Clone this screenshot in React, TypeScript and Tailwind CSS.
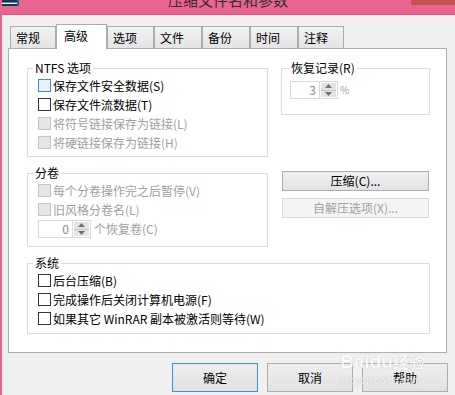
import React from "react";

type Kind = "focus" | "normal" | "disabled";

function Check({ label, kind }: { label: string; kind: Kind }) {
  const box =
    kind === "focus"
      ? "border-[#3c8fe0] bg-[#eaf3fc]"
      : kind === "disabled"
      ? "border-[#c4c4c4] bg-[#e6e6e6]"
      : "border-[#333333] bg-white";
  const text = kind === "disabled" ? "text-[#a0a0a0]" : "text-black";
  return (
    <div className="flex h-[19px] items-center">
      <span className={`block h-[13px] w-[13px] shrink-0 border ${box}`} />
      <span className={`ml-[2px] whitespace-nowrap text-[12px] leading-[14px] ${text}`}>{label}</span>
    </div>
  );
}

function Group({
  legend,
  legendLeft,
  className,
  children,
}: {
  legend: string;
  legendLeft: string;
  className: string;
  children?: React.ReactNode;
}) {
  return (
    <div className={`relative border border-[#dcdcdc] ${className}`}>
      <span
        className={`absolute top-[-8px] ${legendLeft} whitespace-nowrap bg-white px-[2px] text-[12px] leading-[14px] text-black`}
      >
        {legend}
      </span>
      {children}
    </div>
  );
}

function Spin({ value, inputW }: { value: string; inputW: string }) {
  return (
    <div className="flex h-[18px]">
      <div
        className={`${inputW} border border-[#d9d9d9] bg-white pr-[3px] text-right text-[12px] leading-[16px] text-[#8a8a8a]`}
      >
        {value}
      </div>
      <div className="flex w-[18px] flex-col border border-l-0 border-[#d9d9d9] bg-white p-px">
        <div className="flex flex-1 items-center justify-center border-b border-[#c8c8c8] bg-[#e4e4e4]">
          <svg width="7" height="4" viewBox="0 0 7 4">
            <path d="M0 4 L3.5 0 L7 4 Z" fill="#707070" />
          </svg>
        </div>
        <div className="flex flex-1 items-center justify-center bg-[#e4e4e4]">
          <svg width="7" height="4" viewBox="0 0 7 4">
            <path d="M0 0 L3.5 4 L7 0 Z" fill="#707070" />
          </svg>
        </div>
      </div>
    </div>
  );
}

const tabs = [
  { t: "常规", w: "w-[46px]" },
  { t: "高级", w: "w-[51px]", sel: true },
  { t: "选项", w: "w-[47px]" },
  { t: "文件", w: "w-[48px]" },
  { t: "备份", w: "w-[48px]" },
  { t: "时间", w: "w-[48px]" },
  { t: "注释", w: "w-[46px]" },
];

export default function App() {
  return (
    <div className="relative flex h-[395px] w-[455px] flex-col overflow-hidden border-l-2 border-[#e6668f] bg-[#f0f0f0] font-['Noto_Sans_CJK_SC','Liberation_Sans',sans-serif]">
      {/* title bar */}
      <div className="flex h-[15px] shrink-0 items-start overflow-hidden border-b border-[#cc5a80] bg-[#e8668f]">
        <svg width="17" height="6" viewBox="0 0 17 6" className="shrink-0">
          <rect x="0" y="0" width="16" height="2" fill="#1d2f5c" />
          <rect x="0" y="2" width="16" height="1" fill="#2fa37a" />
          <rect x="0" y="3" width="15" height="1" fill="#e8f0f0" />
          <rect x="0" y="4" width="16" height="2" fill="#203050" />
          <rect x="15" y="0" width="2" height="6" fill="#3d5a8a" />
        </svg>
        <span className="ml-[149px] mt-[-8px] whitespace-nowrap text-[15px] leading-[15px] text-[#3a2630]">
          压缩文件名和参数
        </span>
        <span className="ml-auto block h-[5px] w-[44px] bg-[#c75252]" />
      </div>

      <div className="flex flex-col pl-[6px]">
        {/* tabs */}
        <div className="mt-[9px] flex h-[24px] items-end pl-[2px]">
          {tabs.map((tb) =>
            tb.sel ? (
              <div
                key={tb.t}
                className={`relative z-10 -mb-px h-[25px] ${tb.w} shrink-0 border border-b-0 border-[#acacac] bg-white pl-[7px] pt-[4px] text-[12px] leading-[14px] text-black`}
              >
                {tb.t}
              </div>
            ) : (
              <div
                key={tb.t}
                className={`h-[22px] ${tb.w} shrink-0 border border-b-0 border-[#acacac] bg-linear-to-b from-[#f2f2f2] to-[#e4e4e4] pl-[5px] pt-[4px] text-[12px] leading-[14px] text-black`}
              >
                {tb.t}
              </div>
            )
          )}
        </div>

        {/* panel */}
        <div className="flex h-[305px] w-[439px] flex-col border border-[#adadad] bg-white pl-[18px] pr-[16px] pt-[19px]">
          <div className="flex gap-[13px]">
            <div className="flex w-[241px] flex-col">
              <Group legend="NTFS 选项" legendLeft="left-[5px]" className="h-[89px] pl-[10px] pt-[7px]">
                <Check label="保存文件安全数据(S)" kind="focus" />
                <Check label="保存文件流数据(T)" kind="normal" />
                <Check label="将符号链接保存为链接(L)" kind="disabled" />
                <Check label="将硬链接保存为链接(H)" kind="disabled" />
              </Group>
              <Group legend="分卷" legendLeft="left-[5px]" className="mt-[16px] h-[74px] pl-[10px] pt-[7px]">
                <Check label="每个分卷操作完之后暂停(V)" kind="disabled" />
                <Check label="旧风格分卷名(L)" kind="disabled" />
                <div className="mt-px flex items-center">
                  <Spin value="0" inputW="w-[35px]" />
                  <span className="ml-[3px] whitespace-nowrap text-[12px] leading-[14px] text-[#a0a0a0]">个恢复卷(C)</span>
                </div>
              </Group>
            </div>
            <div className="flex w-[149px] flex-col">
              <Group legend="恢复记录(R)" legendLeft="left-[7px]" className="h-[47px] pl-[8px] pt-[12px]">
                <div className="flex items-center">
                  <Spin value="3" inputW="w-[30px]" />
                  <span className="ml-[2px] text-[10px] leading-[14px] text-[#a0a0a0]">%</span>
                </div>
              </Group>
              <div className="ml-px mt-[56px] flex h-[20px] w-[147px] items-center justify-center border border-[#adadad] bg-linear-to-b from-[#f0f0f0] to-[#e3e3e3] text-[12px] leading-[14px] text-black">
                压缩(C)...
              </div>
              <div className="ml-px mt-[7px] flex h-[20px] w-[147px] items-center justify-center border border-[#dadada] bg-[#f4f4f4] text-[12px] leading-[14px] text-[#a0a0a0]">
                自解压选项(X)...
              </div>
            </div>
          </div>
          <Group legend="系统" legendLeft="left-[5px]" className="mt-[16px] h-[71px] w-[403px] pl-[10px] pt-[7px]">
            <Check label="后台压缩(B)" kind="normal" />
            <Check label="完成操作后关闭计算机电源(F)" kind="normal" />
            <Check label="如果其它 WinRAR 副本被激活则等待(W)" kind="normal" />
          </Group>
        </div>

        {/* bottom buttons */}
        <div className="mt-[10px] flex gap-[9px] pl-[164px]">
          <div className="flex h-[29px] w-[86px] items-center justify-center border border-[#3c8fe0] bg-linear-to-b from-[#eeeeee] to-[#e2e2e2] text-[12px] leading-[14px] text-black">
            确定
          </div>
          <div className="flex h-[29px] w-[86px] items-center justify-center border border-[#adadad] bg-linear-to-b from-[#eeeeee] to-[#e2e2e2] text-[12px] leading-[14px] text-black">
            取消
          </div>
          <div className="flex h-[29px] w-[86px] items-center justify-center border border-[#adadad] bg-linear-to-b from-[#eeeeee] to-[#e2e2e2] text-[12px] leading-[14px] text-black">
            帮助
          </div>
        </div>
      </div>

      {/* watermark */}
      <div className="pointer-events-none absolute left-[338px] top-[351px] flex flex-col items-start opacity-70">
        <span className="whitespace-nowrap font-['Liberation_Sans',sans-serif] text-[19px] font-bold leading-[21px] text-white [text-shadow:0_0_1px_#9a9a9a]">
          Baidu<span className="font-['Noto_Sans_CJK_SC',sans-serif] text-[16px]">经验</span>
        </span>
        <span className="mt-[3px] whitespace-nowrap font-['Liberation_Sans',sans-serif] text-[10px] leading-[11px] text-white [text-shadow:0_0_1px_#9a9a9a]">
          jingyan.baidu.com
        </span>
      </div>
    </div>
  );
}
